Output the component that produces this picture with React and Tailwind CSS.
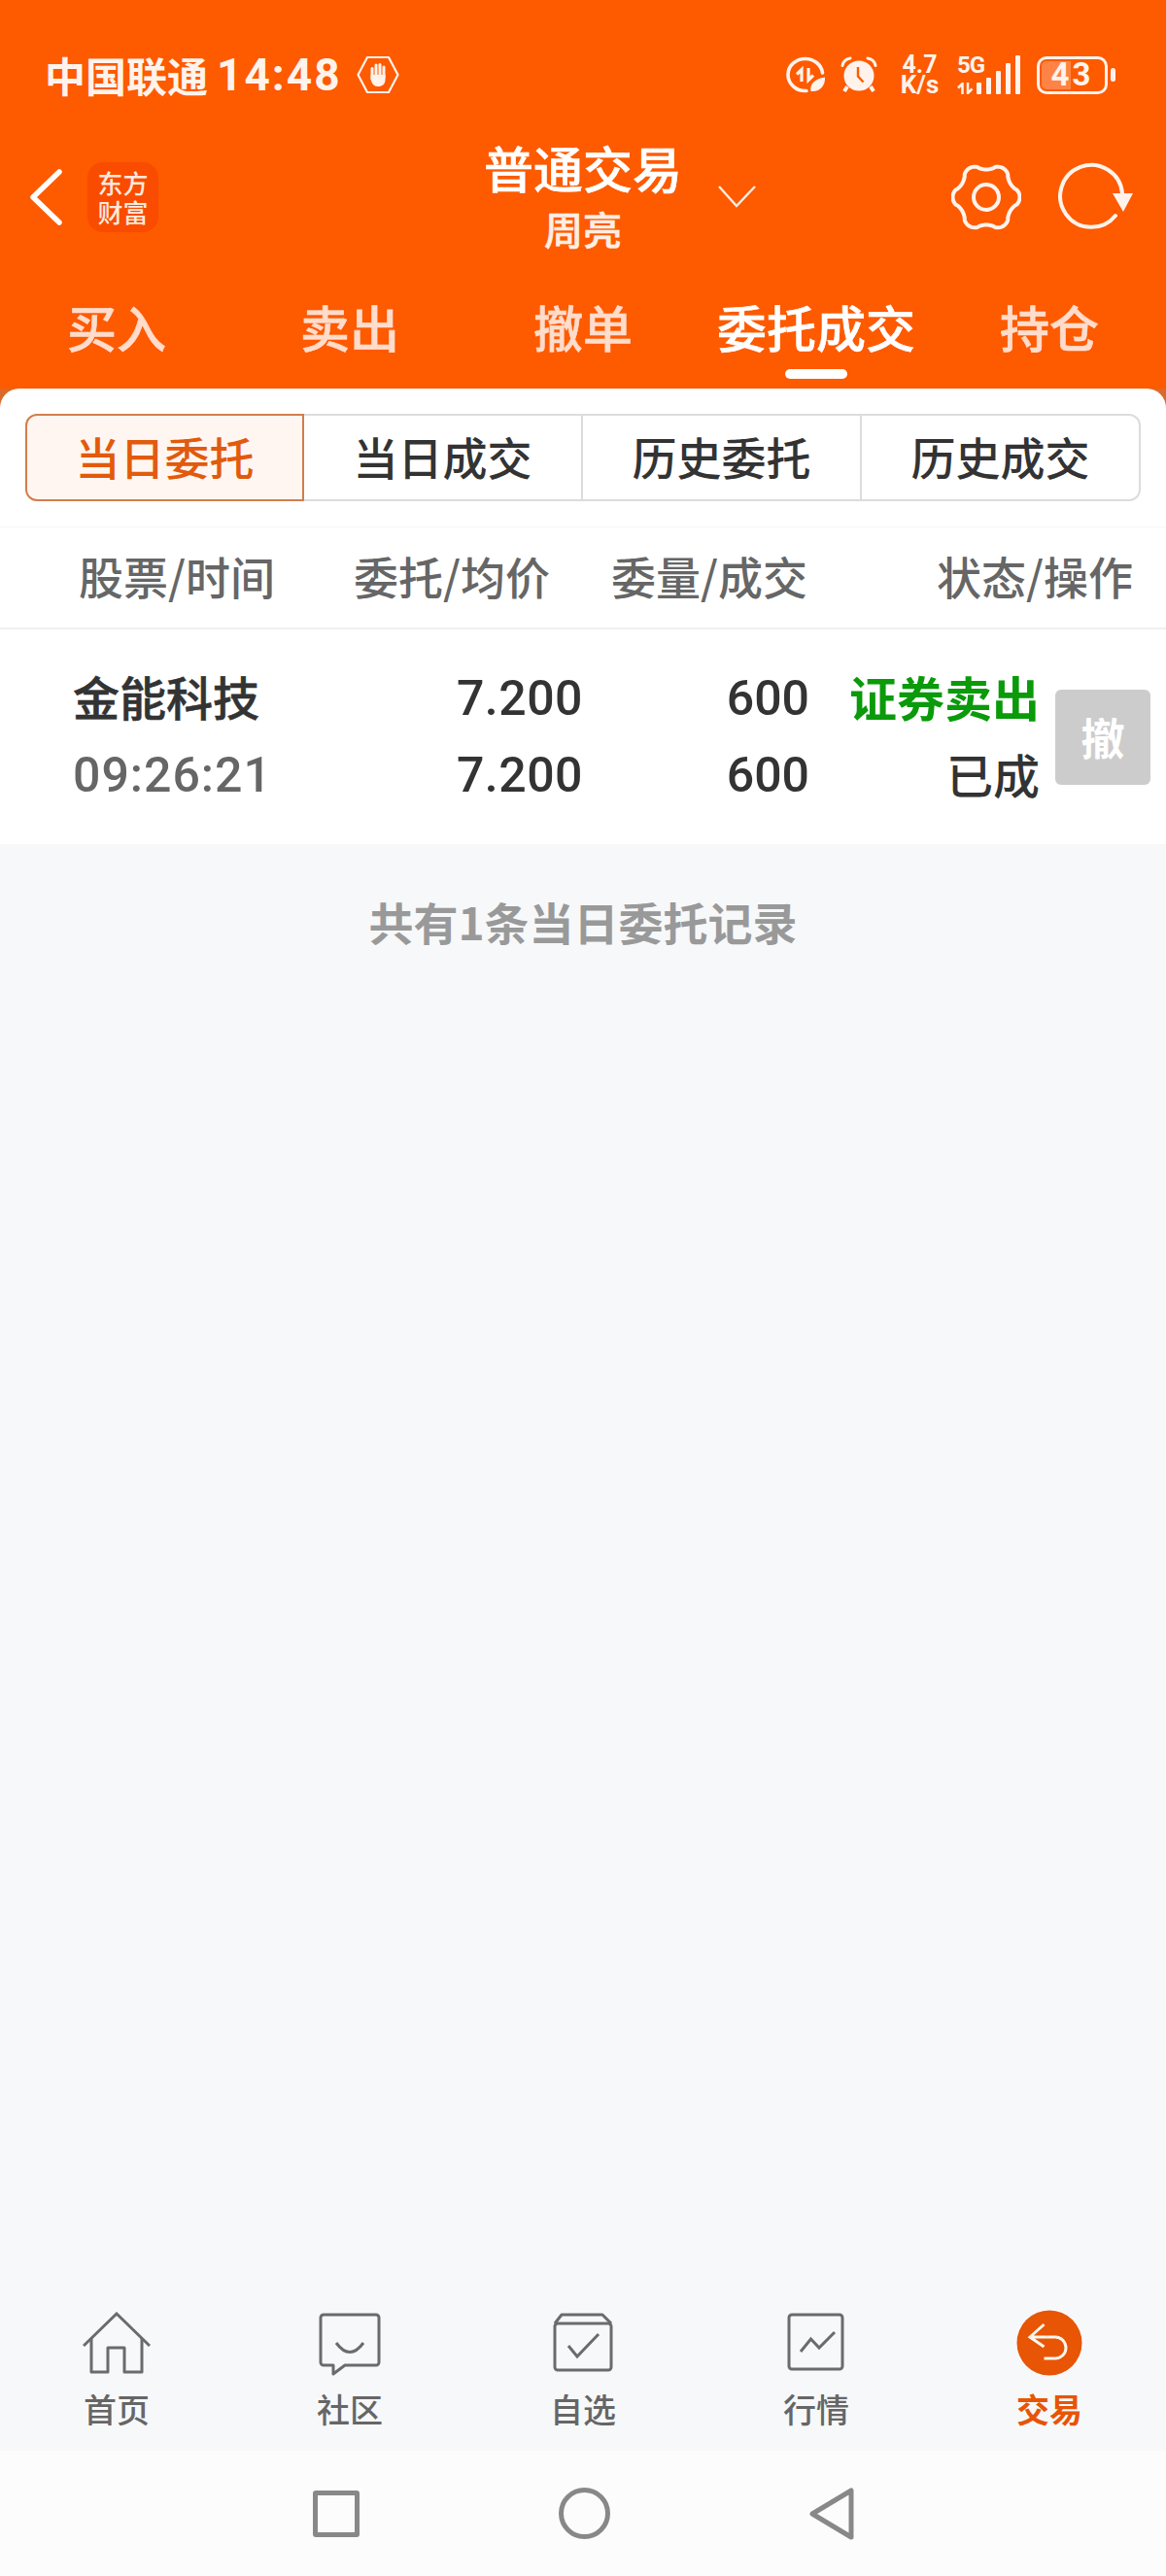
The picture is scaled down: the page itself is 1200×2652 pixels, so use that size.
import React from 'react'

const CJK = "font-['Noto_Sans_CJK_SC','Noto_Sans',sans-serif]"
const NUM = "font-['Roboto','Noto_Sans_CJK_SC',sans-serif]"
const THICK = '[-webkit-text-stroke:0.6px_currentColor]'

const topTabs = ['买入', '卖出', '撤单', '委托成交', '持仓']
const subTabs = ['当日委托', '当日成交', '历史委托', '历史成交']

// six flat-topped lobes for the settings button
function gearPath(cx, cy, r, amp) {
  const pts = []
  for (let i = 0; i < 180; i++) {
    const t = (i / 180) * Math.PI * 2
    const c = Math.cos(6 * t)
    const rad = r + amp * Math.sign(c) * Math.pow(Math.abs(c), 0.7)
    pts.push(`${(cx + rad * Math.cos(t)).toFixed(2)} ${(cy + rad * Math.sin(t)).toFixed(2)}`)
  }
  return `M${pts.join('L')}Z`
}

function HandBadge() {
  return (
    <svg width="44" height="40" viewBox="0 0 44 40" fill="none" className="ml-[15px]">
      <path d="M11 2H33L42.5 20L33 38H11L1.5 20Z" stroke="#fff3ec" strokeWidth="2.2" strokeLinejoin="round" />
      <g fill="#fff3ec">
        <rect x="14.5" y="12" width="3" height="14" rx="1.5" />
        <rect x="18.5" y="8.5" width="3" height="16" rx="1.5" />
        <rect x="22.5" y="8" width="3" height="16" rx="1.5" />
        <rect x="26.5" y="10.5" width="3" height="14" rx="1.5" />
        <path d="M14.5 20H29.5V25C29.5 29.5 26.5 32 22 32C18.5 32 16.5 30 15.5 27.5L14.5 24Z" />
      </g>
    </svg>
  )
}

function DataSaver() {
  return (
    <svg width="42" height="38" viewBox="0 0 42 38" fill="none">
      <path d="M22 35.5C11 36 3 28 3 19C3 9.500 11 2.500 21 2.500C30 2.500 37.500 9 38.500 17" stroke="#fff3ec" strokeWidth="3.6" strokeLinecap="round" />
      <path d="M12 18.500L17 13.500V26M24 12V24.500L29 19.500" stroke="#fff3ec" strokeWidth="3.200" />
      <path d="M26.500 36C25 29 30 23 41 21.500C41.500 30 36 37 26.500 36Z" fill="#fff3ec" />
    </svg>
  )
}

function AlarmClock() {
  return (
    <svg width="38" height="38" viewBox="0 0 38 38" fill="none">
      <circle cx="19" cy="20" r="15.500" fill="#fff3ec" />
      <path d="M2 9.500C3 5 6 2.500 10 2M36 9.500C35 5 32 2.500 28 2" stroke="#fff3ec" strokeWidth="3" strokeLinecap="round" />
      <path d="M7 31L4 36M31 31L34 36" stroke="#fff3ec" strokeWidth="4" />
      <path d="M18 11V20.500L23.500 26.500" stroke="#fe5a00" strokeWidth="2.400" />
    </svg>
  )
}

function SignalBars() {
  return (
    <div className="flex items-end gap-[5px] h-[40px]">
      <span className="w-[5px] h-[12px] rounded-[1px] bg-[#fff3ec]" />
      <span className="w-[5px] h-[17px] rounded-[1px] bg-[#fff3ec]" />
      <span className="w-[5px] h-[24px] rounded-[1px] bg-[#fff3ec]" />
      <span className="w-[5px] h-[32px] rounded-[1px] bg-[#fff3ec]" />
      <span className="w-[5px] h-[40px] rounded-[1px] bg-[#fff3ec]" />
    </div>
  )
}

function StatusBar() {
  return (
    <div className="h-[134px] pl-[46px] pr-[52px] pt-[20px] flex items-start justify-between text-[#fff3ec]">
      <div className="flex items-center h-[114px]">
        <span className={`${CJK} text-[42px] leading-[48px] font-bold`}>中国联通</span>
        <span className={`${NUM} text-[46px] leading-[48px] font-bold ml-[9px] tracking-[2px]`}>14:48</span>
        <HandBadge />
      </div>
      <div className="flex items-center h-[114px]">
        <DataSaver />
        <span className="ml-[15px]"><AlarmClock /></span>
        <div className={`${NUM} ml-[23px] flex flex-col items-center font-bold w-[41px]`}>
          <span className="text-[25px] leading-[20px]">4.7</span>
          <span className="text-[26px] leading-[20px]">K/s</span>
        </div>
        <div className="ml-[18px] flex items-end gap-0">
          <div className={`${NUM} flex flex-col font-bold w-[20px]`}>
            <span className="text-[24px] leading-[20px] tracking-[-1px] whitespace-nowrap">5G</span>
            <svg width="17" height="12" viewBox="0 0 17 12" className="mt-[8px]" fill="none">
              <path d="M1 5.500L5.500 1V12M11 0V11L15.500 6.500" stroke="#fff3ec" strokeWidth="2.500" />
            </svg>
          </div>
          <SignalBars />
        </div>
        <div className="ml-[17px] w-[73px] h-[39px] rounded-[10px] border-[3px] border-[#fff3ec] p-[2px]">
          <div className={`${NUM} h-full rounded-[5px] bg-[linear-gradient(90deg,#ff8345_48%,transparent_48%)] flex items-center justify-center text-[33px] font-bold tracking-[3px]`}>43</div>
        </div>
        <span className="ml-[3px] w-[5px] h-[14px] rounded-full bg-[#fff3ec]" />
      </div>
    </div>
  )
}

function TitleRow() {
  return (
    <div className="h-[172px] pt-[8px] grid grid-cols-[1fr_auto_1fr] items-start">
      <div className="flex items-center pl-[29px] pt-[25px]">
        <svg width="36" height="60" viewBox="0 0 36 60" fill="none">
          <path d="M32 4L5 30L32 56" stroke="#fff" strokeWidth="5.500" strokeLinecap="round" strokeLinejoin="round" />
        </svg>
        <div className={`${CJK} ml-[25px] w-[73px] h-[72px] rounded-[16px] bg-[#f94c00] flex flex-col items-center justify-center text-[26px] leading-[30px] font-medium text-[#ffe9dc]`}>
          <span>东方</span>
          <span>财富</span>
        </div>
      </div>
      <div className={`${CJK} flex flex-col items-center text-white`}>
        <span className={`text-[51px] leading-[60px] font-medium ${THICK}`}>普通交易</span>
        <span className={`text-[40px] leading-[50px] mt-[8px] font-medium text-[#ffeee4] ${THICK}`}>周亮</span>
      </div>
      <div className="flex items-start pt-[24px] pr-[33px]">
        <svg width="42" height="24" viewBox="0 0 42 24" fill="none" className="ml-[36px] mt-[24px]">
          <path d="M2 2L20 22L39 2" stroke="#ffeee4" strokeWidth="2.400" />
        </svg>
        <div className="ml-auto flex items-center gap-[38px]">
          <svg width="72" height="72" viewBox="0 0 72 72" fill="none">
            <path d={gearPath(36, 36, 31.500, 3)} stroke="#fff3ec" strokeWidth="4" strokeLinejoin="round" />
            <circle cx="36" cy="36" r="13" stroke="#fff3ec" strokeWidth="4" />
          </svg>
          <svg width="78" height="74" viewBox="0 0 78 74" fill="none">
            <path d="M66 33A32 32 0 1 0 59 56" stroke="#fff3ec" strokeWidth="4" strokeLinecap="round" />
            <path d="M56 33H77L67 52Z" fill="#fff3ec" />
          </svg>
        </div>
      </div>
    </div>
  )
}

function TopTabs() {
  return (
    <div className="grid grid-cols-5">
      {topTabs.map((t, i) => (
        <div key={t} className="flex flex-col items-center">
          <span className={`${CJK} text-[51px] leading-[60px] font-medium ${THICK} ${i === 3 ? 'text-white' : 'text-[#ffdccb]'}`}>{t}</span>
          {i === 3 && <span className="mt-[14px] w-[64px] h-[10px] rounded-full bg-white" />}
        </div>
      ))}
    </div>
  )
}

function SubTabs() {
  return (
    <div className="h-[143px] pt-[26px] px-[26px] border-b border-[#f6f6f6]">
      <div className="grid grid-cols-4 h-[90px]">
        {subTabs.map((t, i) => (
          <div
            key={t}
            className={`${CJK} flex items-center justify-center pb-[4px] text-[46px] font-medium ${
              i === 0
                ? 'bg-[#fff6f1] border-2 border-[#d47d4b] rounded-l-[12px] text-[#e25a0c]'
                : `border-y-2 border-r-2 border-[#dcdcdc] text-[#333] ${i === 3 ? 'rounded-r-[12px]' : ''}`
            }`}
          >
            {t}
          </div>
        ))}
      </div>
    </div>
  )
}

function TableHead() {
  return (
    <div className={`${CJK} h-[105px] pb-[4px] border-b-2 border-[#f0f0f0] grid grid-cols-[283px_283px_265px_335px] items-center text-[46px] font-medium text-[#666] text-right`}>
      <span>股票/时间</span>
      <span>委托/均价</span>
      <span>委量/成交</span>
      <span>状态/操作</span>
    </div>
  )
}

function OrderRow() {
  return (
    <div className="h-[221px] bg-white flex items-center">
      <div className="w-[600px] pl-[75px] pr-0 grid grid-cols-[1fr_auto] gap-y-[19px]">
        <span className={`${CJK} -mt-[3px] mb-[3px] text-[48px] leading-[60px] font-medium text-[#333] ${THICK}`}>金能科技</span>
        <span className={`${NUM} text-[50px] leading-[60px] font-medium text-[#333] tracking-[0.5px]`}>7.200</span>
        <span className={`${NUM} text-[50px] leading-[60px] font-medium text-[#666] tracking-[1px]`}>09:26:21</span>
        <span className={`${NUM} text-[50px] leading-[60px] font-medium text-[#333] tracking-[0.5px]`}>7.200</span>
      </div>
      <div className={`${NUM} w-[233px] flex flex-col items-end gap-y-[19px] text-[50px] leading-[60px] font-medium text-[#333]`}>
        <span>600</span>
        <span>600</span>
      </div>
      <div className={`${CJK} w-[237px] pb-[4px] flex flex-col items-end gap-y-[19px] leading-[60px]`}>
        <span className="text-[49px] font-bold text-[#0a9a0a]">证券卖出</span>
        <span className="text-[48px] font-medium text-[#333]">已成</span>
      </div>
      <button className={`${CJK} ml-[16px] w-[98px] h-[98px] rounded-[6px] bg-[#cccccc] text-white text-[45px] font-bold`}>撤</button>
    </div>
  )
}

function BottomNav() {
  const stroke = '#6b6b6b'
  return (
    <div className={`${CJK} h-[154px] pt-[9px] grid grid-cols-5 text-[34px] leading-[44px] font-medium text-[#666]`}>
      <div className="flex flex-col items-center">
        <div className="h-[70px] pt-[2px]">
          <svg width="70" height="64" viewBox="0 0 70 64" fill="none" stroke={stroke} strokeWidth="3">
            <path d="M1 35L35 2L69 35" />
            <path d="M9 27V62H26V37H43V62H61V27" strokeLinejoin="round" />
          </svg>
        </div>
        <span className="mt-[10px]">首页</span>
      </div>
      <div className="flex flex-col items-center">
        <div className="h-[70px] pt-[2px]">
          <svg width="66" height="66" viewBox="0 0 66 66" fill="none" stroke={stroke} strokeWidth="3">
            <path d="M16 55H6A3 3 0 0 1 3 52V6A3 3 0 0 1 6 3H60A3 3 0 0 1 63 6V52A3 3 0 0 1 60 55H28L16 64Z" strokeLinejoin="round" />
            <path d="M19 32Q33 51 47 32" />
          </svg>
        </div>
        <span className="mt-[10px]">社区</span>
      </div>
      <div className="flex flex-col items-center">
        <div className="h-[70px] pt-[2px]">
          <svg width="64" height="62" viewBox="0 0 64 62" fill="none" stroke={stroke} strokeWidth="3">
            <rect x="3" y="12" width="58" height="48" rx="3" />
            <path d="M3 12L10 3H52L61 12" strokeLinejoin="round" />
            <path d="M17 35L26 46L48 23" />
          </svg>
        </div>
        <span className="mt-[10px]">自选</span>
      </div>
      <div className="flex flex-col items-center">
        <div className="h-[70px] pt-[2px]">
          <svg width="62" height="62" viewBox="0 0 62 62" fill="none" stroke={stroke} strokeWidth="3">
            <rect x="3" y="3" width="55" height="56" rx="3" />
            <path d="M15 41L25.500 28L34 37L50 21" />
          </svg>
        </div>
        <span className="mt-[10px]">行情</span>
      </div>
      <div className="flex flex-col items-center text-[#e75505] font-bold">
        <div className="h-[70px]">
          <svg width="68" height="68" viewBox="0 0 68 68" fill="none">
            <circle cx="34" cy="34" r="33.500" fill="#e75505" />
            <path d="M28.500 15L14 28L28.500 38M14 28H40A11 11 0 0 1 40 50H28.500" stroke="#fff5ec" strokeWidth="3" />
          </svg>
        </div>
        <span className="mt-[10px]">交易</span>
      </div>
    </div>
  )
}

function SystemNav() {
  return (
    <div className="h-[129px] bg-[#fcfcfc] flex items-center justify-center gap-[205px]">
      <span className="w-[48px] h-[48px] border-[5px] border-[#888] rounded-[3px]" />
      <span className="w-[53px] h-[53px] border-[5px] border-[#888] rounded-full" />
      <svg width="46" height="54" viewBox="0 0 46 54" fill="none">
        <path d="M43 3V51L3 27Z" stroke="#888" strokeWidth="5" strokeLinejoin="round" />
      </svg>
    </div>
  )
}

export default function App() {
  return (
    <div className="w-[1200px] h-[2652px] flex flex-col bg-[#f7f8fa] overflow-hidden">
      <div className="h-[400px] bg-[#fe5a00] flex flex-col">
        <StatusBar />
        <TitleRow />
        <TopTabs />
      </div>
      <div className="bg-[#d96a2a]">
        <div className="bg-white rounded-t-[20px]">
          <SubTabs />
          <TableHead />
          <OrderRow />
        </div>
      </div>
      <div className={`${CJK} flex-1 pt-[45px] text-center text-[46px] leading-[68px] font-bold text-[#999]`}>共有1条当日委托记录</div>
      <BottomNav />
      <SystemNav />
    </div>
  )
}
